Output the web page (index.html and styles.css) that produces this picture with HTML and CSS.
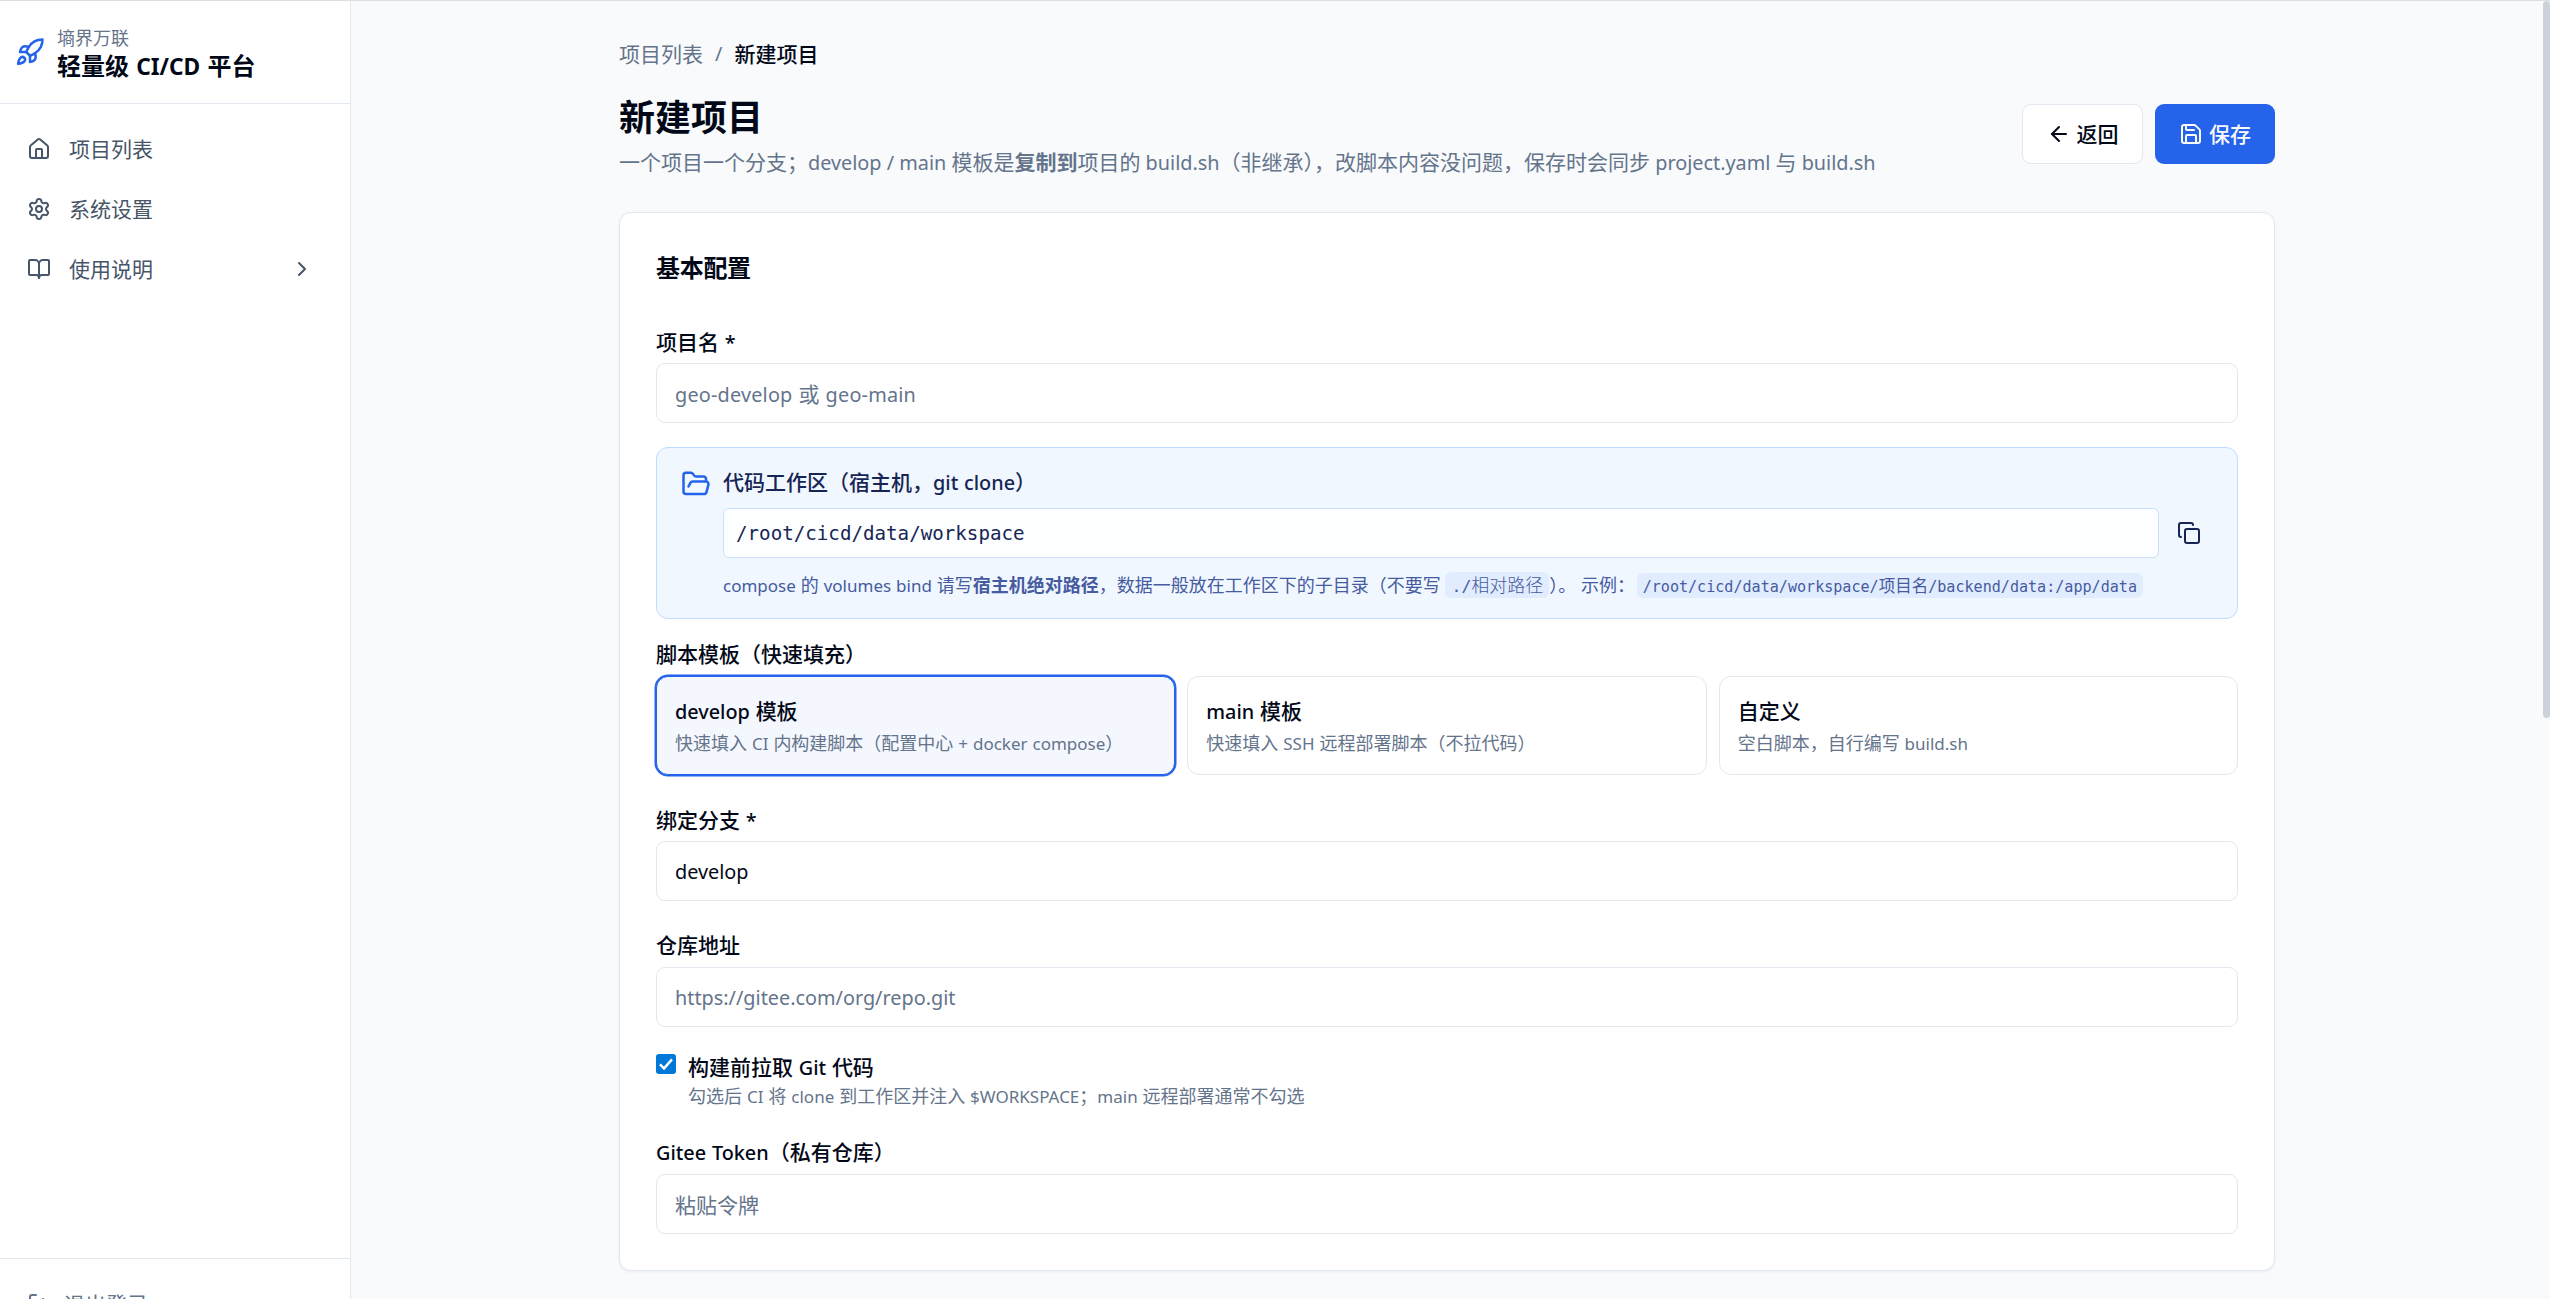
FILE: index.html
```html
<!DOCTYPE html>
<html lang="zh-CN">
<head>
<meta charset="utf-8">
<title>新建项目 - 轻量级 CI/CD 平台</title>
<link rel="stylesheet" href="styles.css">
</head>
<body>
<div class="app">
  <aside class="sidebar">
    <div class="brand">
      <svg class="icon icon-lg" viewBox="0 0 24 24"><path d="M4.5 16.5c-1.5 1.26-2 5-2 5s3.74-.5 5-2c.71-.84.7-2.13-.09-2.91a2.18 2.18 0 0 0-2.91-.09z"/><path d="m12 15-3-3a22 22 0 0 1 2-3.95A12.88 12.88 0 0 1 22 2c0 2.72-.78 7.5-6 11a22.35 22.35 0 0 1-4 2z"/><path d="M9 12H4s.55-3.03 2-4c1.62-1.08 5 0 5 0"/><path d="M12 15v5s3.03-.55 4-2c1.08-1.62 0-5 0-5"/></svg>
      <div class="brand-text">
        <div class="brand-org">墒界万联</div>
        <div class="brand-name">轻量级 <span class="en">CI/CD</span> 平台</div>
      </div>
    </div>
    <nav class="nav">
      <a class="nav-item"><svg class="icon" viewBox="0 0 24 24"><path d="M15 21v-8a1 1 0 0 0-1-1h-4a1 1 0 0 0-1 1v8"/><path d="M3 10a2 2 0 0 1 .709-1.528l7-5.999a2 2 0 0 1 2.582 0l7 5.999A2 2 0 0 1 21 10v9a2 2 0 0 1-2 2H5a2 2 0 0 1-2-2z"/></svg><span>项目列表</span></a>
      <a class="nav-item"><svg class="icon" viewBox="0 0 24 24"><path d="M9.671 4.136a2.34 2.34 0 0 1 4.659 0 2.34 2.34 0 0 0 3.319 1.915 2.34 2.34 0 0 1 2.33 4.033 2.34 2.34 0 0 0 0 3.831 2.34 2.34 0 0 1-2.33 4.033 2.34 2.34 0 0 0-3.319 1.915 2.34 2.34 0 0 1-4.659 0 2.34 2.34 0 0 0-3.32-1.915 2.34 2.34 0 0 1-2.33-4.033 2.34 2.34 0 0 0 0-3.831A2.34 2.34 0 0 1 6.35 6.051a2.34 2.34 0 0 0 3.319-1.915"/><circle cx="12" cy="12" r="3"/></svg><span>系统设置</span></a>
      <a class="nav-item"><svg class="icon" viewBox="0 0 24 24"><path d="M12 7v14"/><path d="M3 18a1 1 0 0 1-1-1V4a1 1 0 0 1 1-1h5a4 4 0 0 1 4 4 4 4 0 0 1 4-4h5a1 1 0 0 1 1 1v13a1 1 0 0 1-1 1h-6a3 3 0 0 0-3 3 3 3 0 0 0-3-3z"/></svg><span>使用说明</span><svg class="icon nav-arrow" viewBox="0 0 24 24"><path d="m9 18 6-6-6-6"/></svg></a>
    </nav>
    <div class="logout"><svg class="icon" viewBox="0 0 24 24"><path d="M9 21H5a2 2 0 0 1-2-2V5a2 2 0 0 1 2-2h4"/><path d="m16 17 5-5-5-5"/><path d="M21 12H9"/></svg><span>退出登录</span></div>
  </aside>

  <main class="main">
    <div class="page">
      <div class="crumbs"><span>项目列表</span><span class="en">/</span><span class="crumb-current">新建项目</span></div>
      <header class="page-head">
        <div>
          <h1 class="page-title">新建项目</h1>
          <p class="page-desc">一个项目一个分支；<span class="en">develop / main </span>模板是<b>复制到</b>项目的<span class="en"> build.sh</span>（非继承），改脚本内容没问题，保存时会同步<span class="en"> project.yaml </span>与<span class="en"> build.sh</span></p>
        </div>
        <div class="actions">
          <button class="btn"><svg class="icon" viewBox="0 0 24 24"><path d="m12 19-7-7 7-7"/><path d="M19 12H5"/></svg>返回</button>
          <button class="btn btn-primary"><svg class="icon" viewBox="0 0 24 24"><path d="M15.2 3a2 2 0 0 1 1.4.6l3.8 3.8a2 2 0 0 1 .6 1.4V19a2 2 0 0 1-2 2H5a2 2 0 0 1-2-2V5a2 2 0 0 1 2-2z"/><path d="M17 21v-7a1 1 0 0 0-1-1H8a1 1 0 0 0-1 1v7"/><path d="M7 3v4a1 1 0 0 0 1 1h7"/></svg>保存</button>
        </div>
      </header>

      <section class="card">
        <h2 class="card-title">基本配置</h2>

        <div class="label">项目名<span class="en"> *</span></div>
        <div class="input placeholder"><span class="name-hint"><span class="en">geo-develop </span>或<span class="en"> geo-main</span></span></div>

        <div class="workspace">
          <svg class="icon icon-lg" viewBox="0 0 24 24"><path d="m6 14 1.5-2.9A2 2 0 0 1 9.24 10H20a2 2 0 0 1 1.94 2.5l-1.54 6a2 2 0 0 1-1.95 1.5H4a2 2 0 0 1-2-2V5a2 2 0 0 1 2-2h3.9a2 2 0 0 1 1.69.9l.81 1.2a2 2 0 0 0 1.67.9H18a2 2 0 0 1 2 2v2"/></svg>
          <div class="workspace-body">
            <div class="workspace-title">代码工作区（宿主机，<span class="en">git clone</span>）</div>
            <div class="path-row">
              <div class="path mono">/root/cicd/data/workspace</div>
              <button class="copy"><svg class="icon" viewBox="0 0 24 24"><rect width="14" height="14" x="8" y="8" rx="2" ry="2"/><path d="M4 16c-1.1 0-2-.9-2-2V4c0-1.1.9-2 2-2h10c1.1 0 2 .9 2 2"/></svg></button>
            </div>
            <div class="workspace-hint"><span class="en">compose </span>的<span class="en"> volumes bind </span>请写<b>宿主机绝对路径</b>，数据一般放在工作区下的子目录（不要写 <code class="chip"><span class="mono">./</span><span class="thin">相对路径</span></code>）。 示例： <code class="chip chip-sm"><span class="mono">/root/cicd/data/workspace/</span>项目名<span class="mono">/backend/data:/app/data</span></code></div>
          </div>
        </div>

        <div class="label label-templates">脚本模板（快速填充）</div>
        <div class="templates">
          <div class="template selected">
            <div class="template-name"><span class="en">develop </span>模板</div>
            <div class="template-desc">快速填入<span class="en"> CI </span>内构建脚本（配置中心<span class="en"> + docker compose</span>）</div>
          </div>
          <div class="template">
            <div class="template-name"><span class="en">main </span>模板</div>
            <div class="template-desc">快速填入<span class="en"> SSH </span>远程部署脚本（不拉代码）</div>
          </div>
          <div class="template">
            <div class="template-name">自定义</div>
            <div class="template-desc">空白脚本，自行编写<span class="en"> build.sh</span></div>
          </div>
        </div>

        <div class="label label-branch">绑定分支<span class="en"> *</span></div>
        <div class="input"><span class="en">develop</span></div>

        <div class="label label-repo">仓库地址</div>
        <div class="input placeholder"><span class="en">https://gitee.com/org/repo.git</span></div>

        <div class="check">
          <svg class="checkbox" viewBox="0 0 20 20"><rect width="20" height="20" rx="3"/><path d="M4 10.4l4 4L16 5.4"/></svg>
          <div>
            <div class="check-label">构建前拉取<span class="en"> Git </span>代码</div>
            <div class="check-desc">勾选后<span class="en"> CI </span>将<span class="en"> clone </span>到工作区并注入<span class="en"> $WORKSPACE</span>；<span class="en">main </span>远程部署通常不勾选</div>
          </div>
        </div>

        <div class="label label-token"><span class="en">Gitee Token</span>（私有仓库）</div>
        <div class="input placeholder">粘贴令牌</div>
      </section>
    </div>
    <div class="scrollbar"></div>
  </main>
</div>
</body>
</html>
```
FILE: styles.css
```css
* { box-sizing: border-box; }
body {
  margin: 0;
  height: 1299px;
  overflow: hidden;
  background: #f8fafc;
  color: #020817;
  font-family: "Noto Sans", "Noto Sans CJK SC", sans-serif;
  font-size: 21px;
  line-height: 30px;
}
h1, h2, p { margin: 0; }
button { font: inherit; color: inherit; margin: 0; }
/* Latin runs are set slightly smaller to balance with the Chinese glyphs */
.en { font-size: .945em; line-height: 1; white-space: pre; word-spacing: .03em; }
.mono { font-family: "DejaVu Sans Mono", monospace; font-size: .914em; line-height: 1; }
.icon {
  width: 24px; height: 24px; flex: none;
  fill: none; stroke: currentColor; stroke-width: 2;
  stroke-linecap: round; stroke-linejoin: round;
}
.icon-lg { width: 30px; height: 30px; color: #2563eb; }

.app { display: flex; height: 1299px; border-top: 1px solid #dddfde; }

.sidebar {
  width: 351px; flex: none;
  display: flex; flex-direction: column;
  background: #fff; border-right: 1px solid #e2e8f0;
}
.brand {
  height: 103px; flex: none;
  display: flex; align-items: center; gap: 12px;
  padding: 0 15px;
  border-bottom: 1px solid #e2e8f0;
}
.brand-text { padding-top: 2px; }
.brand-org { font-size: 18px; line-height: 25px; color: #64748b; }
.brand-name { font-size: 24px; line-height: 30px; font-weight: 700; word-spacing: 1px; }
.nav { flex: 1; padding-top: 15px; color: #475569; }
.nav-item { display: flex; align-items: center; gap: 18px; height: 60px; padding: 0 36px 0 27px; }
.nav-arrow { margin-left: auto; }
.logout {
  height: 41px; flex: none; overflow: hidden;
  display: flex; gap: 13px;
  padding: 33px 27px 0;
  border-top: 1px solid #e2e8f0;
  color: #64748b;
}
.logout span { margin-top: -3px; }

.main { flex: 1; display: flex; }
.page { width: 1656px; margin: 0 auto; padding-top: 38px; }
.crumbs { display: flex; align-items: center; gap: 12px; color: #64748b; }
.crumb-current { color: #020817; font-weight: 500; }
.page-head { display: flex; justify-content: space-between; margin-top: 25px; }
.page-title { font-size: 36px; line-height: 48px; font-weight: 700; }
.page-desc { margin-top: 5px; color: #64748b; white-space: nowrap; }
.page-desc .en { word-spacing: 0; }
.actions { display: flex; gap: 12px; padding-top: 10px; height: 70px; }
.btn {
  display: flex; align-items: center; justify-content: center; gap: 6px;
  width: 121px; height: 60px;
  border: 1px solid #e2e8f0; border-radius: 9px;
  background: #fff; font-weight: 500;
}
.btn-primary { width: 120px; border: 0; background: #2563eb; color: #f8fafc; }

.card {
  margin-top: 35px; padding: 36px;
  border: 1px solid #e2e8f0; border-radius: 12px;
  background: #fff; box-shadow: 0 1px 3px rgba(15, 23, 42, .06);
}
.card-title { font-size: 24px; line-height: 38px; font-weight: 600; letter-spacing: -.3px; margin-bottom: 40px; }
.label { font-weight: 500; margin-bottom: 6px; }
.label-templates { margin: 20px 0 7px; }
.label-branch { margin-top: 30px; }
.label-repo { margin: 29px 0 7px; }
.label-token { margin: 28px 0 7px; }
.input {
  display: flex; align-items: center;
  height: 60px; padding: 2px 18px 0;
  border: 1px solid #e2e8f0; border-radius: 9px;
}
.placeholder { color: #64748b; }
.name-hint { letter-spacing: .2px; }

.workspace {
  display: flex; gap: 12px;
  height: 172px; margin-top: 24px; padding: 21px 24px 0;
  border: 1px solid #bfdbfe; border-radius: 12px;
  background: #f0f7ff;
  color: #172554;
}
.workspace-body { flex: 1; }
.workspace-title { font-weight: 500; line-height: 26px; }
.path-row { display: flex; align-items: center; gap: 6px; margin-top: 13px; }
.path {
  flex: 1; height: 50px; padding: 0 12px;
  border: 1px solid #cce0fe; border-radius: 6px;
  background: #fdfeff;
  font-size: 19.18px; line-height: 49px;
}
.copy { display: flex; justify-content: center; width: 48px; padding: 0; border: 0; background: none; }
.workspace-hint { margin-top: 12px; font-size: 18px; color: #465ba0; white-space: nowrap; }
.chip { padding: 1px 6px; border-radius: 6px; background: #e1ecfe; font: inherit; line-height: 1; }
.chip-sm { font-size: 16.5px; margin-left: -3px; }
.thin { font-weight: 300; }

.templates { display: grid; grid-template-columns: repeat(3, 1fr); gap: 12px; }
.template { height: 99px; padding: 19px 18px 0; border: 1px solid #e2e8f0; border-radius: 12px; }
.selected { border-color: #2563eb; background: #f4f7fe; box-shadow: 0 0 0 1.5px #2563eb; }
.template-name { font-weight: 500; }
.template-desc { margin-top: 4px; font-size: 18px; line-height: 27px; color: #64748b; }

.check { display: flex; gap: 12px; margin-top: 26px; }
.checkbox { width: 20px; height: 20px; margin-top: 1px; flex: none; fill: #0078d7; }
.checkbox path { fill: none; stroke: #fff; stroke-width: 2.4; }
.check-label { font-weight: 500; line-height: 28px; }
.check-desc { margin-top: 2px; font-size: 18px; line-height: 26px; color: #64748b; }

.scrollbar { width: 7px; height: 717px; flex: none; border-radius: 4px; background: #cbd2dc; }
```
